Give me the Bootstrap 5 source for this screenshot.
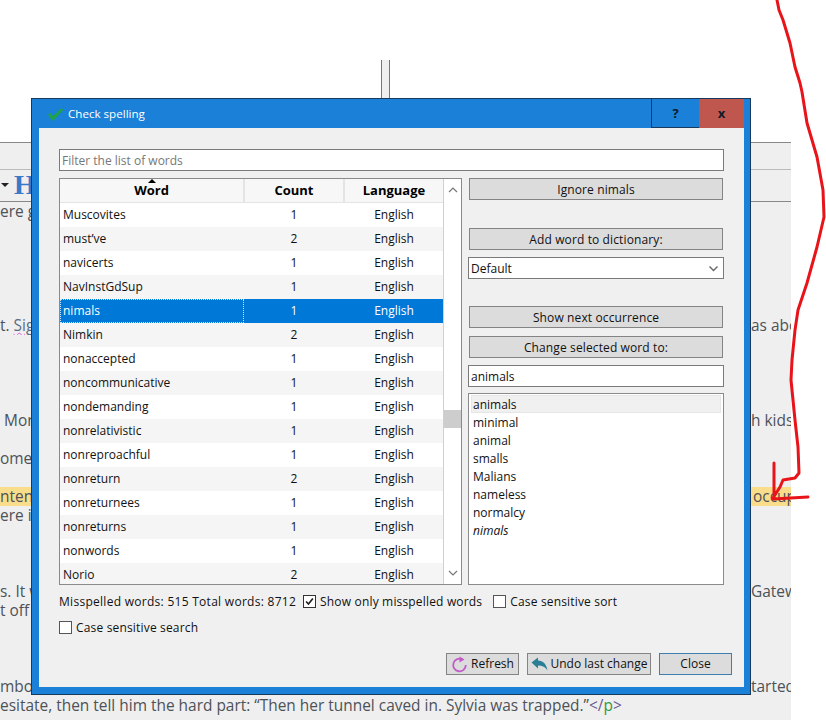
<!DOCTYPE html>
<html lang="en">
<head>
<meta charset="utf-8">
<title>Check spelling</title>
<link href="https://cdn.jsdelivr.net/npm/bootstrap@5.3.0/dist/css/bootstrap.min.css" rel="stylesheet">
<style>
html,body{margin:0;height:720px;overflow:hidden;background:#fff}
body{position:relative;font-family:"Open Sans","Noto Sans",sans-serif;font-size:12px;color:#111}
.top-zone{height:142px;padding:60px 0 0 381px}
.top-sliver{width:9px;height:38px;background:#efefef;border-left:1px solid #777;border-right:1px solid #777}
.editor{width:791px;height:578px;background:#efefef;border-top:1px solid #888;overflow:hidden}
.tool-a{height:27px;border-bottom:1px solid #bbb}
.tool-b{height:32px;border-bottom:1px solid #888;padding-left:1px;padding-bottom:1px;gap:5px}
.tool-caret{width:0;height:0;border-left:4px solid transparent;border-right:4px solid transparent;border-top:4px solid #222}
.tool-h{font-family:"Liberation Serif",serif;font-size:28px;line-height:1;color:#3a78c9;font-weight:700}
.txt{height:19px;line-height:19px;font-size:15.45px;color:#4d5258;white-space:nowrap;display:grid;grid-template-columns:751px 40px}
.txt span{overflow:hidden}
.hi{background:#f9dd8b}
.hi-r{background:#f9dd8b;padding-left:2px}
.sic{color:#5d6c80;text-decoration:underline wavy #e05ad8 1px}
.tag-a{color:#6a5a94}.tag-p{color:#2f9a46}
.dlg{position:absolute;left:31px;top:98px;width:720px;height:597px;background:#1a80d8;border:1px solid #17395c;padding:0 6px 7px 7px;display:flex;flex-direction:column}
.dlg-title{height:29px;flex:none;color:#fff;padding-left:8px}
.dlg-name{margin-left:4px;font-size:11.6px}
.win-btn{height:29px;border-radius:0;padding:0;font-weight:700;font-size:13px;color:#101a28;line-height:1}
.win-help{width:48px;background:#1a80d8;border:0;border-left:1px solid #17395c;border-bottom:1px solid #17395c}
.win-close{width:45px;background:#c0574f;border:0}
.dlg-body{flex:1;background:#f0f0f0;padding:21px 20px 0;display:flex;flex-direction:column}
.fld{height:22px;border-radius:0;border:1px solid #7a7a7a;padding:0 2px;font-size:12px;color:#111;background-color:#fff;flex:none;min-height:0}
.fld::placeholder{color:#777}
.main-row{margin-top:7px;height:407px;gap:6px}
.word-box{width:403px;border:1px solid #8a8a8a;background:#fff;overflow:hidden;display:flex}
.word-scroll{flex:1;overflow:hidden}
.word-table{table-layout:fixed;width:384px;margin:0;font-size:12px;--bs-table-color:#111}
.word-table th{height:23px;padding:0;text-align:center;font-size:13px;font-weight:700;color:#000;background:#f7f7f7;border-bottom:1px solid #e4e4e4;border-right:2px solid #e4e4e4;line-height:22px;vertical-align:top;position:relative}
.word-table td{height:24px;padding:0;text-align:center;border:0;line-height:24px;vertical-align:middle}
.word-table td:first-child{text-align:left;padding-left:3px}
.word-table tbody tr:nth-child(even) td{background:#f5f5f5}
.word-table tbody tr.sel td{background:#0078d7;color:#fff}
.word-table tbody tr.sel td:first-child{outline:1px dotted #cfe4f7;outline-offset:-1px}
.sort-up{position:absolute;left:50%;top:0;margin-left:-4px;width:0;height:0;border-left:4px solid transparent;border-right:4px solid transparent;border-bottom:4px solid #000}
.sbar{width:18px;flex:none;border-left:1px solid #d0d0d0;display:flex;flex-direction:column;background:#fff}
.sbar-end{height:22px;flex:none;display:flex;align-items:center;justify-content:center}
.sbar-thumb{height:18px;background:#cdcdcd;margin-top:209px}
.sbar-fill{flex:1}
.right-col{width:256px;flex:none;display:flex;flex-direction:column}
.act{height:22px;border-radius:0;background:#dcdcdc;border:1px solid #848484;padding:0;font-size:12px;color:#111;line-height:20px;flex:none}
.right-col .act{margin-left:1px;margin-right:1px;letter-spacing:.12px;padding-top:1px}
.right-col .gap-28{margin-top:28px}.right-col .gap-27{margin-top:27px}.right-col .gap-8{margin-top:8px}.right-col .gap-7{margin-top:7px}
.sel-fld{background-image:url("data:image/svg+xml,%3csvg xmlns='http://www.w3.org/2000/svg' viewBox='0 0 11 9'%3e%3cpath fill='none' stroke='%23666' stroke-width='1.400' d='M1.500 2.500l4 4 4-4'/%3e%3c/svg%3e");background-size:11px 9px;background-position:right 4px center;padding:1px 2px 0;height:22px}
.suggest{margin-top:6px;flex:1;border:1px solid #8a8a8a;border-radius:0;background:#fff;padding:1px 2px 0;--bs-list-group-bg:transparent}
.suggest .list-group-item{padding:0 2px;height:18px;line-height:20px;border:0;font-size:12px;color:#111;background:transparent}
.suggest .list-group-item.on{background:#f0f0f0;border:1px solid #e6e6e6;padding:0 1px;line-height:18px}
.suggest .list-group-item.alt{font-style:italic}
.opt-row{height:20px;margin-top:6px;padding-top:1px}
.opt-row .form-check-input{width:13px;height:13px;margin:0;border-radius:0;border:1px solid #555;flex:none;background-color:#fff}
.opt-row .form-check-input:checked{background-color:#fff;border-color:#333;background-image:url("data:image/svg+xml,%3csvg xmlns='http://www.w3.org/2000/svg' viewBox='0 0 13 13'%3e%3cpath fill='none' stroke='%23222' stroke-width='2' d='M2.500 6.500l2.800 3L10.500 3'/%3e%3c/svg%3e");background-size:100%}
.stat{letter-spacing:.28px;margin-right:7px}
.opt{letter-spacing:.17px;margin-left:4px}
.opt-row .opt-b{margin-left:11px}
.foot-row{margin-top:16px;margin-right:-8px;gap:8px}
.foot-row .act{display:flex;align-items:center;justify-content:center;gap:3px}
.act-icon{width:73px}.act-undo{width:124px}.act-close{width:73px;border-color:#3c7fb1}
.ink{position:absolute;left:0;top:0;pointer-events:none}
</style>
</head>
<body>
<div class="top-zone"><div class="top-sliver"></div></div>
<div class="editor">
  <div class="tool-a"></div>
  <div class="tool-b d-flex align-items-center"><span class="tool-caret"></span><span class="tool-h">H</span></div>
  <div class="txt"><span>ere going on</span><span></span></div>
  <div class="txt"></div><div class="txt"></div><div class="txt"></div><div class="txt"></div><div class="txt"></div>
  <div class="txt"><span>t. <span class="sic">Sig</span>rid was</span><span>as abo</span></div>
  <div class="txt"></div><div class="txt"></div><div class="txt"></div><div class="txt"></div>
  <div class="txt"><span>&nbsp;More of</span><span>h kids</span></div>
  <div class="txt"></div>
  <div class="txt"><span>omen in</span><span></span></div>
  <div class="txt"></div>
  <div class="txt"><span><span class="hi">ntent of the page</span></span><span class="hi-r">occup</span></div>
  <div class="txt"><span>ere is a</span><span></span></div>
  <div class="txt"></div><div class="txt"></div><div class="txt"></div>
  <div class="txt"><span>s. It was</span><span>Gatew</span></div>
  <div class="txt"><span>t off the</span><span></span></div>
  <div class="txt"></div><div class="txt"></div><div class="txt"></div>
  <div class="txt"><span>mbo and</span><span>tarted</span></div>
  <div class="txt"><span>esitate, then tell him the hard part: “Then her tunnel caved in. Sylvia was trapped.”<span class="tag-a">&lt;/</span><span class="tag-p">p</span><span class="tag-a">&gt;</span></span><span></span></div>
</div>

<div class="dlg" role="dialog">
  <div class="dlg-title d-flex align-items-center">
    <svg width="17" height="14" viewBox="0 0 17 14"><path d="M1 7.500l2.500-1.500 2.500 3L14 1.500l2.500 1L6.500 13.500h-1.500z" fill="#1fa34a"/></svg>
    <span class="dlg-name">Check spelling</span>
    <button type="button" class="btn win-btn win-help ms-auto">?</button>
    <button type="button" class="btn win-btn win-close">x</button>
  </div>
  <div class="dlg-body">
    <input class="form-control fld" placeholder="Filter the list of words">
    <div class="main-row d-flex">
      <div class="word-box">
        <div class="word-scroll">
          <table class="table word-table">
            <colgroup><col style="width:184px"><col style="width:100px"><col style="width:100px"></colgroup>
            <thead><tr><th><span class="sort-up"></span>Word</th><th>Count</th><th>Language</th></tr></thead>
            <tbody>
              <tr><td>Muscovites</td><td>1</td><td>English</td></tr>
              <tr><td>must’ve</td><td>2</td><td>English</td></tr>
              <tr><td>navicerts</td><td>1</td><td>English</td></tr>
              <tr><td>NavInstGdSup</td><td>1</td><td>English</td></tr>
              <tr class="sel"><td>nimals</td><td>1</td><td>English</td></tr>
              <tr><td>Nimkin</td><td>2</td><td>English</td></tr>
              <tr><td>nonaccepted</td><td>1</td><td>English</td></tr>
              <tr><td>noncommunicative</td><td>1</td><td>English</td></tr>
              <tr><td>nondemanding</td><td>1</td><td>English</td></tr>
              <tr><td>nonrelativistic</td><td>1</td><td>English</td></tr>
              <tr><td>nonreproachful</td><td>1</td><td>English</td></tr>
              <tr><td>nonreturn</td><td>2</td><td>English</td></tr>
              <tr><td>nonreturnees</td><td>1</td><td>English</td></tr>
              <tr><td>nonreturns</td><td>1</td><td>English</td></tr>
              <tr><td>nonwords</td><td>1</td><td>English</td></tr>
              <tr><td>Norio</td><td>2</td><td>English</td></tr>
            </tbody>
          </table>
        </div>
        <div class="sbar">
          <div class="sbar-end"><svg width="10" height="6" viewBox="0 0 10 6"><path d="M1 5l4-4 4 4" fill="none" stroke="#777" stroke-width="1.200"/></svg></div>
          <div class="sbar-thumb"></div>
          <div class="sbar-fill"></div>
          <div class="sbar-end"><svg width="10" height="6" viewBox="0 0 10 6"><path d="M1 1l4 4 4-4" fill="none" stroke="#777" stroke-width="1.200"/></svg></div>
        </div>
      </div>
      <div class="right-col">
        <button type="button" class="btn act">Ignore nimals</button>
        <button type="button" class="btn act gap-28">Add word to dictionary:</button>
        <select class="form-select fld sel-fld gap-7"><option>Default</option></select>
        <button type="button" class="btn act gap-27">Show next occurrence</button>
        <button type="button" class="btn act gap-8">Change selected word to:</button>
        <input class="form-control fld gap-7" value="animals">
        <ul class="list-group suggest">
          <li class="list-group-item on">animals</li>
          <li class="list-group-item">minimal</li>
          <li class="list-group-item">animal</li>
          <li class="list-group-item">smalls</li>
          <li class="list-group-item">Malians</li>
          <li class="list-group-item">nameless</li>
          <li class="list-group-item">normalcy</li>
          <li class="list-group-item alt">nimals</li>
        </ul>
      </div>
    </div>
    <div class="opt-row d-flex align-items-center">
      <span class="stat">Misspelled words: 515 Total words: 8712</span>
      <input class="form-check-input" type="checkbox" checked>
      <span class="opt">Show only misspelled words</span>
      <input class="form-check-input opt-b" type="checkbox">
      <span class="opt">Case sensitive sort</span>
    </div>
    <div class="opt-row d-flex align-items-center">
      <input class="form-check-input" type="checkbox">
      <span class="opt">Case sensitive search</span>
    </div>
    <div class="foot-row d-flex justify-content-end">
      <button type="button" class="btn act act-icon">
        <svg width="17" height="17" viewBox="0 0 17 17"><path d="M11.500 3.500A6.300 6.300 0 1 0 14.800 9" fill="none" stroke="#c25ac8" stroke-width="1.800"/><path d="M8.500 0.500l5 3-5 3z" fill="#c25ac8"/></svg>
        Refresh</button>
      <button type="button" class="btn act act-undo">
        <svg width="17" height="14" viewBox="0 0 17 14"><path d="M0.500 5.500L7 0.500v3c5 0 8.500 3.500 9.500 10-2-3.500-5-5-9.500-5v3z" fill="#2a7f96"/></svg>
        Undo last change</button>
      <button type="button" class="btn act act-close">Close</button>
    </div>
  </div>
</div>

<svg class="ink" width="826" height="720" viewBox="0 0 826 720">
  <path d="M777 0L779 10L783 20L790 43L795 67L800 83L802 92L807 123L817 157L823 190L824 217L817 247L807 283L798 310L795 330L792 360L791 380L795 420L798 447L799 473L795 478L783 480L780 487L773 498M774 463V498M773 499L808 497" fill="none" stroke="#e8141a" stroke-width="3" stroke-linejoin="round" stroke-linecap="round"/>
</svg>
<script src="https://cdn.jsdelivr.net/npm/bootstrap@5.3.0/dist/js/bootstrap.bundle.min.js"></script>
</body>
</html>
